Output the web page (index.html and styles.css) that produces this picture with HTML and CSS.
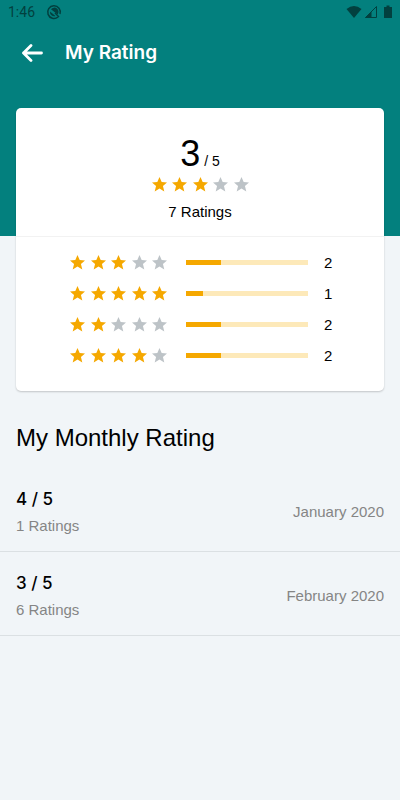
FILE: index.html
```html
<!DOCTYPE html>
<html lang="en">
<head>
    <meta charset="UTF-8">
    <meta name="viewport" content="width=device-width, initial-scale=1.0">
    <title>My Rating</title>
    <link rel="stylesheet" href="styles.css">
</head>
<body>

    <!-- Shared star shape -->
    <svg class="symbols" aria-hidden="true">
        <symbol id="star" viewBox="0 0 20 20">
            <path d="M10 0l2.900 6.800 7.100 0.400-5.400 4.700 1.800 7.300L10 15.200l-6.400 4 1.800-7.300L0 7.200l7.100-0.400z"/>
        </symbol>
    </svg>

    <header class="header">
        <div class="status-bar">
            <span class="time">1:46</span>
            <svg class="status-app" width="16" height="16" viewBox="0 0 16 16">
                <path d="M12 13A6.300 6.300 0 1 1 14 10" fill="none" stroke="currentColor" stroke-width="1.500"/>
                <path d="M5 5.200A4.200 4.200 0 0 1 11.600 10.400zM4 7.500l5.500 4.500A4.200 4.200 0 0 1 4 7.500z" fill="currentColor"/>
                <path d="M9 9l4 4" stroke="currentColor" stroke-width="1.500"/>
            </svg>
            <div class="status-icons">
                <svg width="16" height="14" viewBox="0 0 16 14">
                    <path d="M8 13L0.500 4Q8-2 15.500 4z" fill="currentColor"/>
                </svg>
                <svg width="14" height="14" viewBox="0 0 14 14">
                    <path d="M1.500 12.500H12.500V1.500z" fill="none" stroke="currentColor"/>
                    <path d="M1 13H7.500V6.500z" fill="currentColor"/>
                </svg>
                <svg class="battery" width="8" height="14" viewBox="0 0 8 14">
                    <path d="M2.500 0.500h3v1.500H8V13H0V2h2.500z" fill="currentColor"/>
                </svg>
            </div>
        </div>
        <nav class="app-bar">
            <button class="back" type="button" aria-label="Back">
                <svg width="22" height="20" viewBox="0 0 22 20" fill="none" stroke="currentColor" stroke-width="2.800" stroke-linecap="round" stroke-linejoin="round">
                    <path d="M9 2.500L1.500 10l7.500 7.500M1.500 10H19.500"/>
                </svg>
            </button>
            <h1>My Rating</h1>
        </nav>
    </header>

    <main>
        <section class="card">
            <div class="summary">
                <p class="score"><span class="value">3</span> / 5</p>
                <div class="stars" role="img" aria-label="3 out of 5 stars">
                    <svg class="on"><use href="#star"/></svg>
                    <svg class="on"><use href="#star"/></svg>
                    <svg class="on"><use href="#star"/></svg>
                    <svg><use href="#star"/></svg>
                    <svg><use href="#star"/></svg>
                </div>
                <p class="total">7 Ratings</p>
            </div>
            <ul class="breakdown">
                <li>
                    <div class="stars" role="img" aria-label="3 out of 5 stars">
                        <svg class="on"><use href="#star"/></svg>
                        <svg class="on"><use href="#star"/></svg>
                        <svg class="on"><use href="#star"/></svg>
                        <svg><use href="#star"/></svg>
                        <svg><use href="#star"/></svg>
                    </div>
                    <div class="bar"><div class="fill" style="width: 28.6%"></div></div>
                    <span class="count">2</span>
                </li>
                <li>
                    <div class="stars" role="img" aria-label="5 out of 5 stars">
                        <svg class="on"><use href="#star"/></svg>
                        <svg class="on"><use href="#star"/></svg>
                        <svg class="on"><use href="#star"/></svg>
                        <svg class="on"><use href="#star"/></svg>
                        <svg class="on"><use href="#star"/></svg>
                    </div>
                    <div class="bar"><div class="fill" style="width: 14.3%"></div></div>
                    <span class="count">1</span>
                </li>
                <li>
                    <div class="stars" role="img" aria-label="2 out of 5 stars">
                        <svg class="on"><use href="#star"/></svg>
                        <svg class="on"><use href="#star"/></svg>
                        <svg><use href="#star"/></svg>
                        <svg><use href="#star"/></svg>
                        <svg><use href="#star"/></svg>
                    </div>
                    <div class="bar"><div class="fill" style="width: 28.6%"></div></div>
                    <span class="count">2</span>
                </li>
                <li>
                    <div class="stars" role="img" aria-label="4 out of 5 stars">
                        <svg class="on"><use href="#star"/></svg>
                        <svg class="on"><use href="#star"/></svg>
                        <svg class="on"><use href="#star"/></svg>
                        <svg class="on"><use href="#star"/></svg>
                        <svg><use href="#star"/></svg>
                    </div>
                    <div class="bar"><div class="fill" style="width: 28.6%"></div></div>
                    <span class="count">2</span>
                </li>
            </ul>
        </section>

        <section class="monthly">
            <h2>My Monthly Rating</h2>
            <ul>
                <li>
                    <div>
                        <p class="month-score">4 / 5</p>
                        <p class="muted">1 Ratings</p>
                    </div>
                    <span class="muted">January 2020</span>
                </li>
                <li>
                    <div>
                        <p class="month-score">3 / 5</p>
                        <p class="muted">6 Ratings</p>
                    </div>
                    <span class="muted">February 2020</span>
                </li>
            </ul>
        </section>
    </main>

</body>
</html>
```
FILE: styles.css
```css
* {
    box-sizing: border-box;
}
body {
    font-family: "Liberation Sans", Arial, sans-serif;
    font-size: 15px;
    line-height: 20px;
    color: #000;
    background-color: #f1f5f8;
    margin: 0;
}
h1, h2, p, ul {
    margin: 0;
    padding: 0;
}
ul {
    list-style: none;
}
.symbols {
    display: none;
}

/* Header */
.header {
    background-color: #03807e;
    padding-bottom: 154px;
}
.status-bar {
    display: flex;
    align-items: center;
    height: 24px;
    padding: 0 8px;
    color: #02403f;
}
.time {
    font-family: Roboto, sans-serif;
    font-size: 14px;
}
.status-app {
    margin-left: 11px;
}
.status-icons {
    display: flex;
    gap: 2px;
    margin-left: auto;
}
.battery {
    margin-left: 4px;
}
.app-bar {
    display: flex;
    align-items: center;
    gap: 21px;
    height: 58px;
    padding: 0 22px;
    color: #fff;
}
.back {
    display: flex;
    padding: 0;
    border: none;
    background: none;
    color: inherit;
    cursor: pointer;
}
h1 {
    font-family: Inter, sans-serif;
    font-size: 19px;
    font-weight: 600;
    line-height: 24px;
}

/* Rating card, pulled up over the header */
.card {
    margin: -128px 16px 0;
    background-color: #fff;
    border-radius: 5px;
    box-shadow: 0 1px 2px rgba(0, 0, 0, 0.2);
}
.summary {
    display: flex;
    flex-direction: column;
    align-items: center;
    padding: 30px 16px 14px;
    border-bottom: 1px solid #f2f2f2;
}
.score {
    font-size: 14px;
    line-height: 32px;
}
.value {
    font-size: 36px;
}
.total {
    margin-top: 10px;
}
.stars {
    display: flex;
    justify-content: space-between;
    width: 97px;
}
.stars svg {
    width: 15px;
    height: 15px;
    fill: #bdc3c7;
}
.stars .on {
    fill: #f5a800;
}
.breakdown {
    padding: 10px 48px 20px 54px;
}
.breakdown li {
    display: flex;
    align-items: center;
    height: 31px;
}
.bar {
    flex: 1;
    height: 5px;
    margin: 0 16px 0 19px;
    background-color: #fde9b9;
}
.fill {
    height: 100%;
    background-color: #f5a800;
}
.count {
    width: 12px;
}

/* Monthly list */
.monthly {
    padding-top: 32px;
}
h2 {
    padding: 0 16px;
    font-size: 24px;
    font-weight: 400;
    line-height: 30px;
    margin-bottom: 15px;
}
.monthly li {
    display: flex;
    justify-content: space-between;
    align-items: center;
    padding: 19px 16px 15px;
    border-bottom: 1px solid #dbe0e3;
}
.month-score {
    font-family: Inter, sans-serif;
    font-size: 17px;
    font-weight: 500;
    line-height: 24px;
    margin-bottom: 5px;
}
.muted {
    color: #858585;
}
```
